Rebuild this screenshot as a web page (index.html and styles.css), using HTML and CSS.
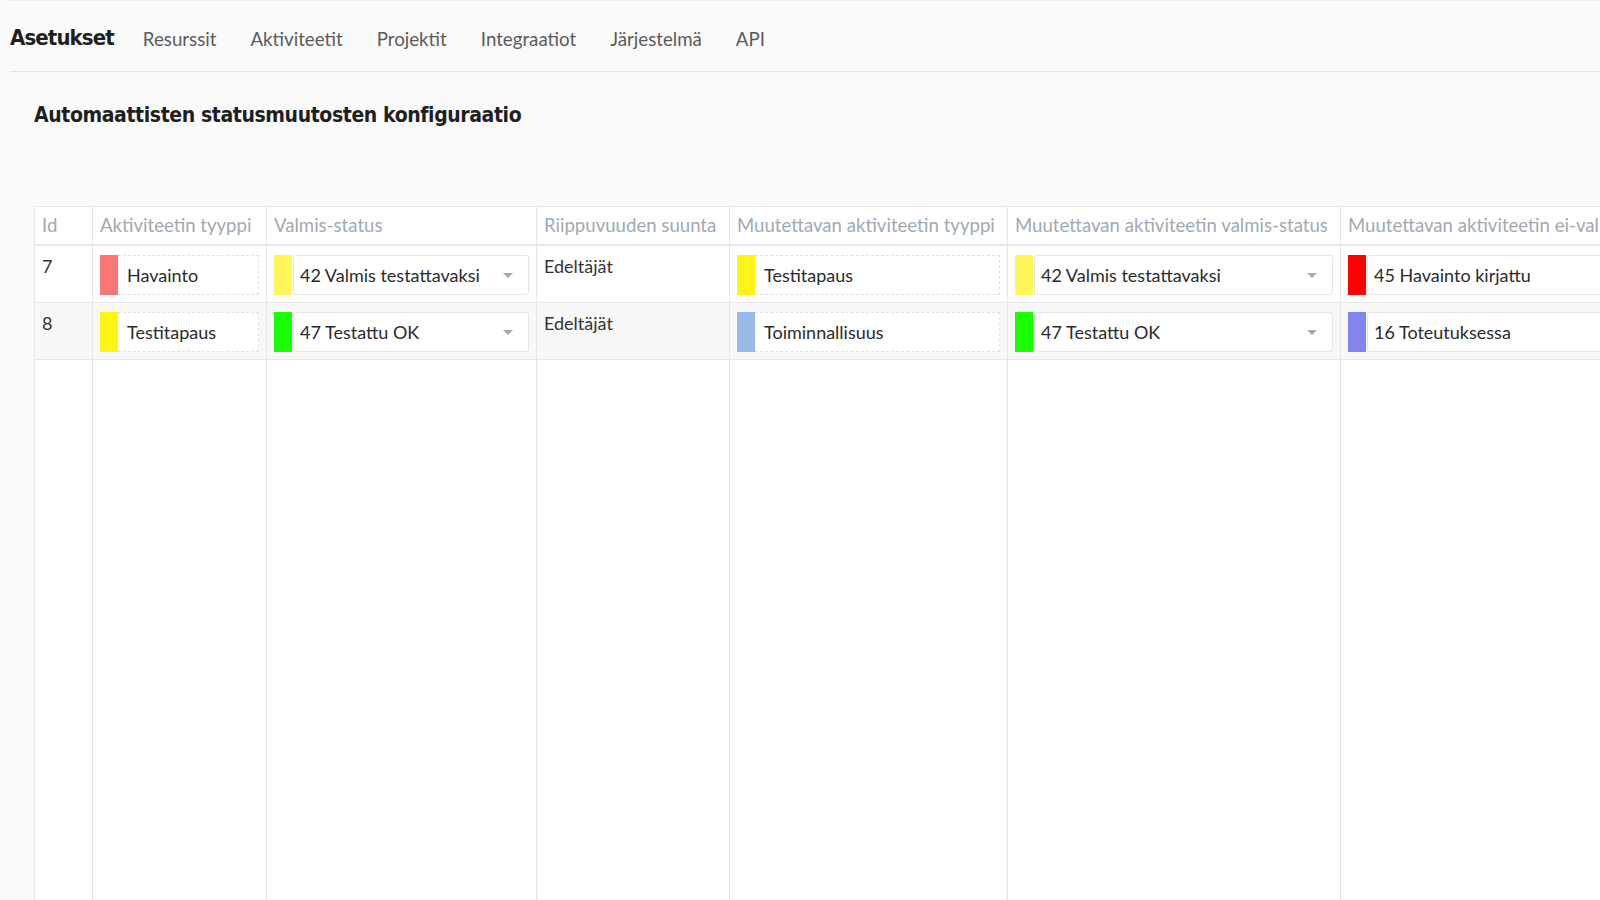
FILE: index.html
```html
<!DOCTYPE html>
<html lang="fi">
<head>
<meta charset="utf-8">
<title>Asetukset</title>
<link rel="stylesheet" href="styles.css">
</head>
<body>
<div class="page">
  <header class="topnav">
    <span class="brand">Asetukset</span>
    <nav class="links">
      <a class="link">Resurssit</a>
      <a class="link">Aktiviteetit</a>
      <a class="link">Projektit</a>
      <a class="link">Integraatiot</a>
      <a class="link">Järjestelmä</a>
      <a class="link">API</a>
    </nav>
  </header>
  <main class="content">
    <h1 class="title">Automaattisten statusmuutosten konfiguraatio</h1>
    <div class="table-wrap">
      <table class="grid">
        <colgroup>
          <col class="c-id"><col class="c-type"><col class="c-status"><col class="c-dir"><col class="c-ttype"><col class="c-tstatus"><col class="c-tnot">
        </colgroup>
        <thead>
          <tr>
            <th>Id</th>
            <th>Aktiviteetin tyyppi</th>
            <th>Valmis-status</th>
            <th>Riippuvuuden suunta</th>
            <th>Muutettavan aktiviteetin tyyppi</th>
            <th>Muutettavan aktiviteetin valmis-status</th>
            <th>Muutettavan aktiviteetin ei-valmis-status</th>
          </tr>
        </thead>
        <tbody>
          <tr class="row">
            <td>7</td>
            <td><div class="field"><span class="chip salmon"></span><span class="box dashed">Havainto</span></div></td>
            <td><div class="field"><span class="chip lightyellow"></span><span class="box select">42 Valmis testattavaksi<span class="caret"></span></span></div></td>
            <td>Edeltäjät</td>
            <td><div class="field"><span class="chip yellow"></span><span class="box dashed">Testitapaus</span></div></td>
            <td><div class="field"><span class="chip lightyellow"></span><span class="box select">42 Valmis testattavaksi<span class="caret"></span></span></div></td>
            <td><div class="field"><span class="chip red"></span><span class="box select">45 Havainto kirjattu<span class="caret"></span></span></div></td>
          </tr>
          <tr class="row alt">
            <td>8</td>
            <td><div class="field"><span class="chip yellow"></span><span class="box dashed">Testitapaus</span></div></td>
            <td><div class="field"><span class="chip green"></span><span class="box select">47 Testattu OK<span class="caret"></span></span></div></td>
            <td>Edeltäjät</td>
            <td><div class="field"><span class="chip blue"></span><span class="box dashed">Toiminnallisuus</span></div></td>
            <td><div class="field"><span class="chip green"></span><span class="box select">47 Testattu OK<span class="caret"></span></span></div></td>
            <td><div class="field"><span class="chip purple"></span><span class="box select">16 Toteutuksessa<span class="caret"></span></span></div></td>
          </tr>
          <tr class="filler">
            <td></td><td></td><td></td><td></td><td></td><td></td><td></td>
          </tr>
        </tbody>
      </table>
    </div>
  </main>
</div>
</body>
</html>
```

FILE: styles.css
```css
html, body {
  margin: 0;
  padding: 0;
  height: 100%;
  overflow: hidden;
  background: #fafafa;
}

body {
  font-family: Lato, "Open Sans", sans-serif;
  color: #333;
}

.page {
  margin-left: 10px;
  border-top: 1px solid #ececec;
}

.topnav {
  display: flex;
  align-items: center;
  box-sizing: border-box;
  height: 71px;
  padding-top: 6px;
  border-bottom: 1px solid #e3e3e3;
}

.brand {
  font-family: "DejaVu Sans Condensed", "Liberation Sans Narrow", Roboto, sans-serif;
  font-weight: 700;
  font-size: 22px;
  color: #1f1f1f;
  margin-top: -3px;
  letter-spacing: -0.9px;
}

.links {
  display: flex;
  margin-left: 29px;
  gap: 34px;
}

.link {
  font-family: Lato, "Open Sans", sans-serif;
  font-size: 18.7px;
  color: #5a5a5a;
  text-decoration: none;
}

.content {
  padding: 0 0 0 24px;
}

.title {
  font-family: "DejaVu Sans Condensed", "Liberation Sans Narrow", Roboto, sans-serif;
  font-weight: 700;
  font-size: 21px;
  line-height: 30px;
  color: #1f1f1f;
  margin: 28px 0 0 0;
  letter-spacing: -0.4px;
}

.table-wrap {
  margin-top: 76px;
  width: 1700px;
}

.grid {
  border-collapse: collapse;
  table-layout: fixed;
  background: #fff;
  font-size: 18px;
}

.c-id { width: 58px; }
.c-type { width: 174px; }
.c-status { width: 270px; }
.c-dir { width: 193px; }
.c-ttype { width: 278px; }
.c-tstatus { width: 333px; }
.c-tnot { width: 360px; }

.grid th,
.grid td {
  border: 1px solid #e7e7e7;
  text-align: left;
  vertical-align: top;
  padding: 8px 7px 7px;
  white-space: nowrap;
  overflow: hidden;
}

.grid th {
  font-weight: 400;
  font-size: 18.6px;
  color: #a1a9b2;
  height: 22px;
  padding-top: 7px;
  padding-bottom: 8px;
  border-bottom: 2px solid #e7e7e7;
}

.grid td {
  line-height: 24px;
  height: 41px;
}

.row.alt td {
  background: #f8f8f8;
}

.filler td {
  height: 600px;
  background: #fff;
}

.field {
  display: flex;
  height: 40px;
  margin-top: 1px;
}

.chip {
  flex: 0 0 18px;
  width: 18px;
}

.salmon { background: #f87676; }
.yellow { background: #fff314; }
.lightyellow { background: #fff75a; }
.green { background: #1aff00; }
.blue { background: #98bbea; }
.purple { background: #8484ef; }
.red { background: #ff0000; }

.box {
  flex: 1;
  display: flex;
  align-items: center;
  padding-left: 9px;
  background: #fff;
  position: relative;
  color: #2b2b2b;
}

.box.dashed {
  border: 1px dashed #e2e2e2;
  border-left: none;
}

.box.select {
  border: 1px solid #e6e6e6;
  border-radius: 3px;
  margin-left: 1px;
  padding-left: 6px;
}

.caret {
  position: absolute;
  right: 15px;
  top: 17px;
  width: 0;
  height: 0;
  border-left: 5px solid transparent;
  border-right: 5px solid transparent;
  border-top: 5px solid #a8a8a8;
}
```
